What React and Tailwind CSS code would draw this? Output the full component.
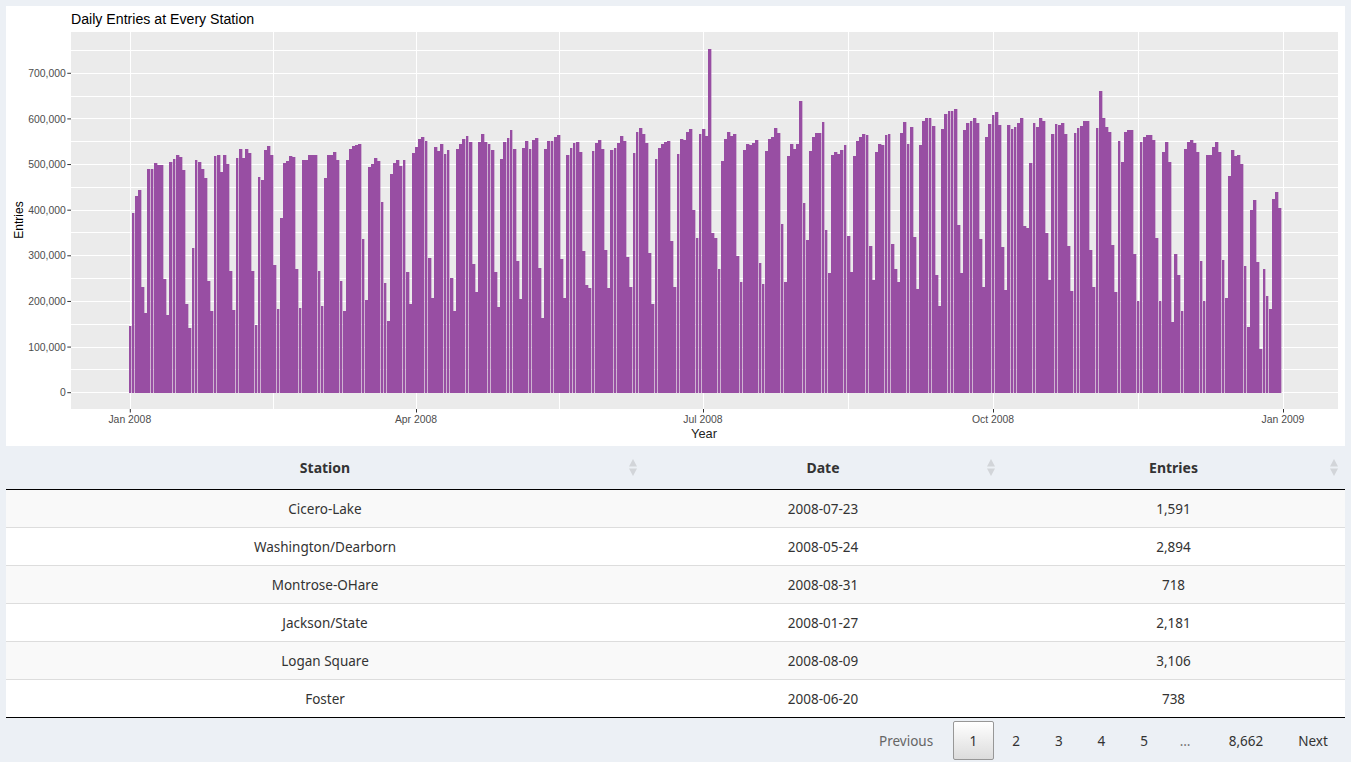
// Daily entries dashboard: chart panel, data table and pager
const font = 'Liberation Sans, Arial, sans-serif';

// thousands of entries per day, from Tue 2008-01-01
const firstDays = [146, 393, 430, 445, 232, 174];
const weeks = [
  [490, 491, 503, 500, 500, 250, 170],
  [505, 512, 520, 516, 487, 195, 142],
  [318, 511, 505, 490, 470, 245, 178],
  [518, 522, 483, 520, 501, 267, 181],
  [514, 533, 514, 533, 525, 267, 148],
  [472, 467, 532, 540, 520, 280, 183],
  [383, 503, 507, 518, 516, 271, 186],
  [510, 510, 520, 522, 520, 267, 190],
  [470, 522, 522, 527, 510, 245, 179],
  [511, 533, 540, 542, 546, 336, 203],
  [494, 501, 514, 507, 417, 240, 158],
  [480, 503, 510, 497, 510, 264, 194],
  [525, 538, 557, 560, 551, 295, 207],
  [538, 530, 544, 523, 532, 251, 178],
  [535, 546, 557, 562, 549, 281, 220],
  [549, 566, 549, 546, 531, 264, 187],
  [512, 549, 558, 575, 535, 288, 205],
  [536, 551, 534, 554, 558, 273, 163],
  [534, 551, 551, 560, 564, 292, 207],
  [520, 536, 547, 549, 527, 310, 237],
  [229, 529, 547, 553, 533, 312, 229],
  [531, 536, 547, 562, 551, 297, 231],
  [525, 571, 580, 567, 547, 306, 194],
  [512, 536, 545, 549, 551, 332, 231],
  [523, 556, 553, 571, 578, 400, 338],
  [567, 578, 562, 753, 349, 338, 270],
  [507, 556, 571, 562, 568, 299, 242],
  [531, 545, 542, 547, 553, 284, 238],
  [529, 556, 560, 580, 569, 369, 242],
  [518, 545, 534, 545, 639, 415, 334],
  [529, 560, 569, 569, 593, 356, 262],
  [520, 527, 523, 531, 542, 343, 264],
  [518, 551, 560, 567, 564, 321, 246],
  [527, 545, 542, 564, 567, 325, 270],
  [242, 569, 593, 545, 582, 341, 227],
  [542, 595, 602, 602, 584, 259, 191],
  [578, 610, 617, 617, 621, 367, 262],
  [575, 591, 595, 602, 591, 336, 231],
  [560, 589, 608, 615, 586, 319, 224],
  [586, 578, 582, 591, 602, 365, 360],
  [503, 591, 582, 602, 595, 349, 246],
  [567, 589, 586, 591, 567, 321, 222],
  [569, 580, 584, 595, 595, 312, 231],
  [580, 661, 602, 582, 571, 323, 220],
  [551, 505, 571, 575, 575, 303, 202],
  [549, 560, 564, 564, 553, 338, 202],
  [528, 549, 505, 156, 305, 259, 180],
  [534, 549, 553, 547, 527, 288, 202],
  [520, 520, 538, 549, 527, 290, 207],
  [474, 531, 518, 520, 501, 277, 143],
  [400, 422, 286, 95, 270, 211, 183],
];
const lastDays = [424, 439, 404];
const daily = [...firstDays, ...weeks.flat(), ...lastDays];

const plot = { left: 71, right: 1338, top: 32, bottom: 409 };
const yOf = (v) => 392.7 - v * 0.4563;
const xOf = (day) => 130.3 + day * 3.15;

const yTicks = [0, 100, 200, 300, 400, 500, 600, 700];
const yMinor = [50, 150, 250, 350, 450, 550, 650, 750];
const xTicks = [
  { x: 130.3, label: 'Jan 2008' },
  { x: 416.5, label: 'Apr 2008' },
  { x: 703.5, label: 'Jul 2008' },
  { x: 993.5, label: 'Oct 2008' },
  { x: 1283.5, label: 'Jan 2009' },
];
const xMinor = [273.5, 559.5, 848.5, 1138.5];

// bars sit on whole pixels, the extra .35 leaves the pale fringe between them
function barBox(v, i) {
  const left = Math.floor(xOf(i) - 1.42 + 0.15);
  const right = Math.floor(xOf(i) + 1.42 + 0.1);
  const top = Math.round(yOf(v));
  return { x: left, y: top, width: right - left + 0.35, height: 393 - top };
}

function DailyChart() {
  return (
    <svg viewBox="6 32 1339 414" className="block w-[1339px] h-[414px]" style={{ fontFamily: font }}>
      <rect x={plot.left} y={plot.top} width={plot.right - plot.left} height={plot.bottom - plot.top} fill="#ebebeb" />
      <g stroke="#ffffff" strokeWidth="1" shapeRendering="crispEdges">
        {[...yTicks, ...yMinor].map((v) => (
          <line key={v} x1={plot.left} x2={plot.right} y1={yOf(v)} y2={yOf(v)} />
        ))}
        {[...xTicks.map((t) => t.x), ...xMinor].map((x) => (
          <line key={x} x1={x} x2={x} y1={plot.top} y2={plot.bottom} />
        ))}
      </g>
      <g fill="#984ea3">
        {daily.map((v, i) => (
          <rect key={i} {...barBox(v, i)} />
        ))}
      </g>
      {yTicks.map((v) => (
        <g key={v}>
          <line x1="67.3" x2={plot.left} y1={yOf(v)} y2={yOf(v)} stroke="#333333" strokeWidth="1" />
          <text x="65.8" y={yOf(v) + 3.6} textAnchor="end" fontSize="10.4" fill="#4d4d4d">
            {v === 0 ? '0' : `${v},000`}
          </text>
        </g>
      ))}
      {xTicks.map((t) => (
        <g key={t.label}>
          <line x1={t.x} x2={t.x} y1={plot.bottom} y2="412.5" stroke="#333333" strokeWidth="1" />
          <text x={t.x - 0.5} y="423.3" textAnchor="middle" fontSize="10.4" fill="#4d4d4d">
            {t.label}
          </text>
        </g>
      ))}
      <text x="704" y="438" textAnchor="middle" fontSize="12.8" fill="#222222">Year</text>
      <text transform="translate(23 220) rotate(-90)" textAnchor="middle" fontSize="12" fill="#000000">Entries</text>
    </svg>
  );
}

function SortIcon() {
  return (
    <svg width="8" height="18" viewBox="0 0 8 18" className="justify-self-end">
      <path d="M4 0 L8 7.5 L0 7.5 Z" fill="#d2d5d9" />
      <path d="M0 9.5 L8 9.5 L4 17 Z" fill="#d2d5d9" />
    </svg>
  );
}

const columns = ['Station', 'Date', 'Entries'];
const rows = [
  ['Cicero-Lake', '2008-07-23', '1,591'],
  ['Washington/Dearborn', '2008-05-24', '2,894'],
  ['Montrose-OHare', '2008-08-31', '718'],
  ['Jackson/State', '2008-01-27', '2,181'],
  ['Logan Square', '2008-08-09', '3,106'],
  ['Foster', '2008-06-20', '738'],
];
const gridCols = 'grid grid-cols-[638px_358px_343px]';

function DataTable() {
  return (
    <div className="w-[1339px] text-[13.5px] text-[#333333]">
      <div className={`${gridCols} h-[44px] border-b border-black`}>
        {columns.map((c) => (
          <div key={c} className="grid grid-cols-[1fr_auto_1fr] items-center px-[7px]">
            <span />
            <span className="font-bold text-[14px]">{c}</span>
            <SortIcon />
          </div>
        ))}
      </div>
      {rows.map((row, i) => (
        <div
          key={row[0]}
          className={`${gridCols} items-center pt-[2px] ${i > 0 ? 'h-[38px] border-t border-[#dddddd]' : 'h-[37px]'} ${i % 2 === 0 ? 'bg-[#f9f9f9]' : 'bg-white'}`}
        >
          {row.map((cell, j) => (
            <div key={j} className="text-center">{cell}</div>
          ))}
        </div>
      ))}
    </div>
  );
}

function Pager() {
  return (
    <div className="w-[1339px] border-t border-black pt-[3px] flex justify-end items-start text-[13.5px] text-[#333333] h-[42px]">
      <span className="w-[85px] h-[39px] pt-[2px] flex items-center justify-center text-[#666666] mr-[4.5px]">Previous</span>
      <span className="w-[40.5px] h-[39px] pt-[2px] flex items-center justify-center border border-[#979797] rounded-[2px] bg-gradient-to-b from-white to-[#dcdcdc]">1</span>
      {['2', '3', '4', '5'].map((n) => (
        <span key={n} className="w-[40px] h-[39px] pt-[2px] ml-[2.6px] flex items-center justify-center">{n}</span>
      ))}
      <span className="w-[42px] h-[39px] pt-[2px] flex items-center justify-center text-[#777777]">…</span>
      <span className="w-[64px] h-[39px] pt-[2px] ml-[8px] flex items-center justify-center">8,662</span>
      <span className="w-[64px] h-[39px] pt-[2px] ml-[3px] flex items-center justify-center">Next</span>
    </div>
  );
}

export default function App() {
  return (
    <div className="min-h-screen bg-[#ecf0f5] pt-[6px] pl-[6px] overflow-hidden" style={{ fontFamily: '"Noto Sans", sans-serif' }}>
      <div className="w-[1339px] bg-white">
        <div className="h-[26px] pl-[65px] pt-[2px] flex items-center text-[14.15px] text-black" style={{ fontFamily: font }}>
          Daily Entries at Every Station
        </div>
        <DailyChart />
      </div>
      <DataTable />
      <Pager />
    </div>
  );
}
